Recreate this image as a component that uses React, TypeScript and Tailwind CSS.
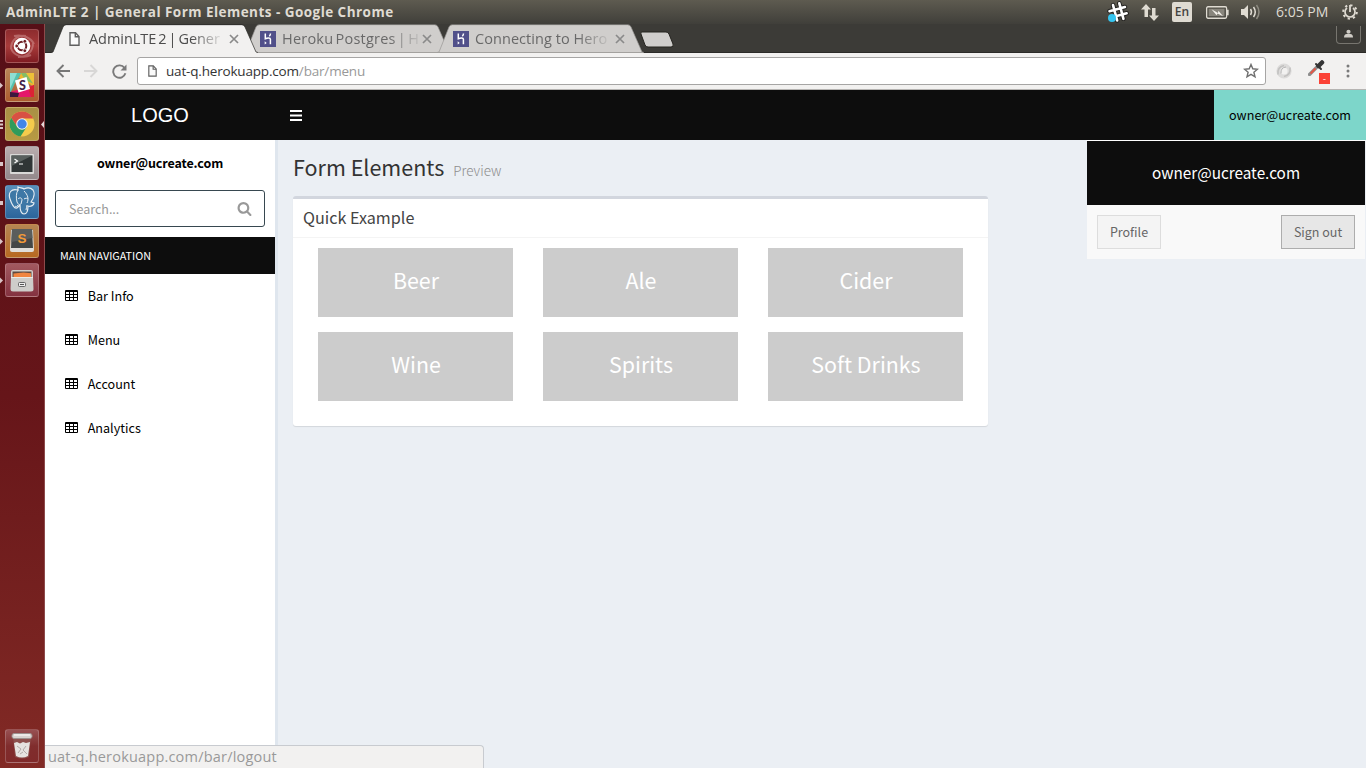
import React from "react";

const UI = "font-['Open_Sans','Noto_Sans',sans-serif]";
const SOURCE = "font-['Noto_Sans_CJK_SC',sans-serif]";

function PageIcon({ className }: { className: string }) {
  return (
    <svg className={className} viewBox="0 0 11 14" fill="none" stroke="#5f5f5f" strokeWidth="1.4">
      <path d="M1 .8h5.5L10 4.5v8.7H1z" fill="#fafafa" />
      <path d="M6.3 1v3.8H10" />
    </svg>
  );
}

function HerokuIcon() {
  return (
    <svg className="h-4 w-4 shrink-0" viewBox="0 0 16 16">
      <rect width="16" height="16" fill="#51508a" />
      <path d="M5.3 2.5v5.2c2-.9 5.1-1.2 5.1.6v5M10.500 2.500c0 1.100-.4 2-1.200 2.700" fill="none" stroke="#fff" strokeWidth="1.5" />
      <path d="M4.700 10.300l2 1.600-2 1.700z" fill="#fff" />
    </svg>
  );
}

function Tab({ title, active, spacing }: { title: string; active?: boolean; spacing: string }) {
  const fill = active ? "#f2f1f0" : "#d0cecc";
  return (
    <div className={"relative h-[29px] w-[207px] shrink-0 -mr-[14px] " + (active ? "z-10" : "")}>
      <svg className="absolute inset-0 h-[29px] w-[207px]" viewBox="0 0 207 29">
        <path d="M0 29L2 28L12 3Q13 1 15 1H191Q193 1 194 3L205 28L207 29Z" fill={fill} />
        <path d="M0 28.500L2 28L12 3Q13 .7 15 .7H191Q193 .7 194 3L205 28L207 28.500" fill="none" stroke={active ? "#2a2926" : "#9a9895"} strokeWidth=".7" />
        {!active && <path d="M1 28.500H206" stroke="#a3a19e" />}
      </svg>
      <div className="relative flex h-[29px] items-center pl-4">
        {active ? <PageIcon className="ml-[2px] mr-[9px] h-[14px] w-[11px] shrink-0" /> : <span className="mr-[6px] flex shrink-0"><HerokuIcon /></span>}
        <span className={"whitespace-nowrap text-[14.5px] leading-5 [mask-image:linear-gradient(to_right,#000_78%,rgba(0,0,0,0.15)_100%)] " + spacing + (active ? " text-[#4c4c4c]" : " text-[#696969]")}>
          {title}
        </span>
        <svg className="absolute left-[178px] top-[10px] h-[10px] w-[10px]" viewBox="0 0 10 10">
          <path d="M1 1l8 8M9 1L1 9" stroke="#8a8a8a" strokeWidth="1.7" />
        </svg>
      </div>
    </div>
  );
}

function Tile({ tone, mark, children }: { tone: string; mark?: string; children: React.ReactNode }) {
  return (
    <div className="flex h-[34px] w-full shrink-0 items-center">
      <svg className="h-[9px] w-[5px] shrink-0" viewBox="0 0 5 9" fill="#d9c5c7">
        {mark === "one" && <path d="M0 1.500L3 4.500L0 7.500z" />}
        {mark === "two" && <path d="M0 3h3v4H0z" />}
        {mark === "many" && <path d="M0 0h3v2H0zM0 3.500h3v2H0zM0 7h3v2H0z" />}
      </svg>
      <div className={"h-[34px] w-[34px] rounded-[3px] border border-white/20 bg-gradient-to-b " + tone}>
        <svg className="h-8 w-8" viewBox="0 0 32 32">
          {children}
        </svg>
      </div>
    </div>
  );
}

function Launcher() {
  return (
    <nav className="relative flex w-[45px] shrink-0 flex-col gap-[5px] border-r border-[#8d4a4b] bg-gradient-to-b from-[#560f17] via-[#661519] to-[#822a25] pt-[5px] pb-[5px]">
      <Tile tone="from-[#8d2c2e] via-[#a83b3b] to-[#801c22]">
        <path d="M5 19C5 10 11 5 20 6M27 13c0 9-6 14-15 14M8 6c9-2 17 2 20 8M25 25C16 29 7 25 5 18" stroke="#d69a97" strokeWidth="2" fill="none" opacity=".5" />
        <circle cx="16" cy="16" r="8.300" fill="#fff" />
        <circle cx="16" cy="16" r="4.300" fill="none" stroke="#6d1d22" strokeWidth="2" />
        <g fill="#6d1d22" stroke="#fff" strokeWidth=".9">
          <circle cx="10.700" cy="16" r="1.900" /><circle cx="18.800" cy="11.300" r="1.900" /><circle cx="18.800" cy="20.700" r="1.900" />
        </g>
      </Tile>
      <Tile mark="one" tone="from-[#b98658] to-[#ad5d2f]">
        <path d="M4 4h12L9 14 4 25z" fill="#57c2ae" />
        <path d="M4 4h7L4 20z" fill="#8edfd3" />
        <path d="M15 4h13v14l-6-4-9-5z" fill="#eeb62f" />
        <path d="M15 4h8l5 11-9-4z" fill="#85bd66" />
        <path d="M20 4h8v12z" fill="#eec038" />
        <path d="M28 16v12H4v-5l18-5z" fill="#e5176a" />
        <path d="M4 23l9 1-1 4H4z" fill="#3c183e" />
        <path d="M22 19l6-3v12h-3z" fill="#db2334" />
        <path d="M9 11.500l11.500-3.500 3.500 12-11.500 3.500z" fill="#fff" />
        <text x="16.500" y="20.500" textAnchor="middle" className="font-['Lato',sans-serif]" fontSize="12.500" fontWeight="900" fill="#43204a">S</text>
      </Tile>
      <Tile mark="many" tone="from-[#a99045] to-[#b79a42]">
        <circle cx="16" cy="16" r="12.500" fill="#f4cc4c" />
        <path d="M5.200 9.700A12.500 12.500 0 0 1 27.200 10.500H16l-5 8z" fill="#d85043" />
        <path d="M5.200 9.700A12.500 12.500 0 0 0 14.500 28.400L20.800 18.800 11.200 18.800z" fill="#2f9b5b" />
        <circle cx="16" cy="16" r="5.800" fill="#f3f1e8" />
        <circle cx="16" cy="16" r="4.700" fill="#4285e8" />
      </Tile>
      <Tile mark="two" tone="from-[#b9adae] to-[#93898b]">
        <rect x="4" y="7" width="24" height="20" rx="1" fill="#d9d9d7" />
        <rect x="5.500" y="8.500" width="21" height="16.500" fill="#303636" />
        <path d="M5.500 8.500h21L5.500 19z" fill="#59605e" />
        <path d="M8.500 12l3 2-3 2M13 17h4" fill="none" stroke="#fff" strokeWidth="1.200" />
      </Tile>
      <Tile mark="two" tone="from-[#588fbb] to-[#2b659b]">
        <path d="M12 4C5 2 2 7 4 13s4 10 7 9l3-3c0 5 1 9 4 9s4-3 4-8c3 1 6-1 6-3l-3-1c3-4 4-9 2-12-3-3-7-2-9-1-1-1-4-1-6-2z" fill="#3e78a6" stroke="#e7edf2" strokeWidth="1.200" />
        <path d="M12 4c-2 3-2 8-1 12 1 2 2 3 3 3M12 13c2-2 4-1 4 1l-1 4M18 5c4 4 5 8 3 12M18 13c1-1 4-1 4 0M9 20c1 1 2 1 3-1M21 19c0 2-1 3-1 5" fill="none" stroke="#e7edf2" strokeWidth="1" />
      </Tile>
      <Tile mark="one" tone="from-[#b58552] to-[#b76920]">
        <path d="M5 5h22l1 20q0 2-2 2H6q-2 0-2-2z" fill="#e0ded9" />
        <path d="M6 4h20l1 19H5z" fill="#444746" />
        <path d="M6 4h20l.5 9L5.500 17z" fill="#5a5d5c" />
        <text x="16" y="17.500" textAnchor="middle" className="font-['Liberation_Sans',sans-serif]" fontSize="13.500" fontWeight="700" fill="#f29b38">S</text>
      </Tile>
      <Tile mark="one" tone="from-[#a25960] to-[#843240]">
        <path d="M5 8q0-2 2-2h18q2 0 2 2v8H5z" fill="#d2d0cd" />
        <path d="M6.500 7.500h19V15h-19z" fill="#5f4a40" />
        <path d="M7.500 9.500l10-1 7.500.8V14H7.500z" fill="#f18540" />
        <path d="M5 13h22l.500 12q0 2.500-2.500 2.500H7q-2.500 0-2.500-2.500z" fill="#cecdca" />
        <path d="M5 13.500h22" stroke="#eceae7" />
        <rect x="12.500" y="18.500" width="7" height="4" rx="1" fill="#eee" stroke="#666" />
        <path d="M14 20.500h4" stroke="#555" />
      </Tile>
      <div className="mt-auto">
        <Tile tone="from-[#975052] via-[#802d2d] to-[#802a2a]">
          <path d="M7 6h18l-2 21q-7 3-14 0z" fill="#8f5653" opacity=".8" />
          <path d="M8 13l3-1 3 1.500 3-1.500 3 1 4-1-2 14q-6 3-12 0z" fill="#e6e3e0" />
          <path d="M11 16l4 3-3 4M20 16l-3 4 4 4M14 24l3-2" stroke="#b2aaa7" fill="none" />
          <rect x="6" y="3.500" width="20" height="5" rx="2" fill="#d8d3d0" stroke="#9d908e" />
          <path d="M8 5h16" stroke="#fff" />
        </Tile>
      </div>
      <svg className="absolute right-0 top-[97px] h-[7px] w-[3px]" viewBox="0 0 3 7"><path d="M3 0v7L0 3.500z" fill="#e5d8d8" /></svg>
    </nav>
  );
}

function SystemBar() {
  return (
    <header className="flex h-6 items-center bg-gradient-to-b from-[#5e5b50] to-[#403f3a] pl-[6px] pr-[8px] text-[#dfdbd2]">
      <h1 className="whitespace-nowrap text-[13.500px] font-bold leading-6 tracking-[0.46px]">AdminLTE 2 | General Form Elements - Google Chrome</h1>
      <div className="ml-auto flex items-center">
        <svg className="mr-[12px] h-[22px] w-[22px]" viewBox="0 0 22 22">
          <g transform="rotate(-15 11 11)" strokeLinecap="round">
            <path d="M8 3v16M14.500 3v16M3 8h16M3 14.500h16" stroke="#22211f" strokeWidth="4.500" />
            <path d="M8 3v16M14.500 3v16M3 8h16M3 14.500h16" stroke="#fff" strokeWidth="2.600" />
          </g>
          <circle cx="5" cy="17" r="4" fill="#35c5f0" />
        </svg>
        <svg className="mr-[13px] h-[17px] w-[18px]" viewBox="0 0 18 17" fill="#dfdbd2">
          <path d="M5 0l5 5.500H7V13H3.500V5.500H0zM13 17l-5-5.500h3V4h3.500v7.500H18z" />
        </svg>
        <span className="mr-[13px] flex h-5 w-5 items-center justify-center rounded-[2px] bg-[#dfdbd2] text-[12px] font-semibold leading-5 text-[#45433f]">En</span>
        <svg className="mr-[11px] h-[13px] w-[25px]" viewBox="0 0 25 14">
          <rect x=".8" y=".8" width="21.500" height="12.400" rx="1.500" fill="none" stroke="#dfdbd2" strokeWidth="1.400" />
          <path d="M23.500 4v6" stroke="#dfdbd2" strokeWidth="2" />
          <rect x="3" y="3" width="17" height="8" fill="#88857c" />
          <path d="M6 3.500l7 4 .5-2.500 5 6-6-3-1 2z" fill="#f4f1eb" />
        </svg>
        <svg className="mr-[15px] h-[18px] w-[20px]" viewBox="0 0 20 18">
          <path d="M0 6h3l4-4v14l-4-4H0z" fill="#dfdbd2" />
          <path d="M9.500 6q2 3 0 6M12.500 4q3.500 5 0 10" fill="none" stroke="#dfdbd2" strokeWidth="1.500" />
          <path d="M15.500 2q5 7 0 14" fill="none" stroke="#8d8a80" strokeWidth="1.500" />
        </svg>
        <span className="w-[66px] whitespace-nowrap text-[14px] leading-6">6:05 PM</span>
        <svg className="h-4 w-4" viewBox="0 0 16 16" fill="none" stroke="#dfdbd2">
          <circle cx="8" cy="8" r="6.800" strokeWidth="2" strokeDasharray="2.300 3.040" />
          <path d="M5 4A5 5 0 1 0 11 4" strokeWidth="1.700" />
          <path d="M8 1v7" strokeWidth="1.800" />
        </svg>
      </div>
    </header>
  );
}

function TabStrip() {
  return (
    <div className="flex h-[29px] bg-[#3c3b37] pl-[6px] shadow-[inset_0_-1px_#2c2b28]">
      <Tab active title="AdminLTE 2 | Gener" spacing="tracking-[-0.05px] [word-spacing:-1.7px]" />
      <Tab title="Heroku Postgres | H" spacing="tracking-[0.22px] [word-spacing:-1.8px]" />
      <Tab title="Connecting to Hero" spacing="tracking-[0.06px]" />
      <svg className="ml-[9px] mt-[7px] h-[17px] w-[35px]" viewBox="0 0 35 17">
        <path d="M3 1h24q2 0 3 2l4 10q1 3-2 3H9q-2 0-3-2L2 3Q1 1 3 1z" fill="#d0cecc" stroke="#25241f" />
      </svg>
      <div className="ml-auto mr-[5px] mt-[2px] flex h-[18px] w-[25px] items-center justify-center rounded-b-[4px] border border-t-0 border-[#77756f]">
        <svg className="mb-[2px] h-[9px] w-[9px]" viewBox="0 0 10 9" fill="#cfccc6"><circle cx="5" cy="2.500" r="2.300" /><path d="M0 9q0-4 3-4h4q3 0 3 4z" /></svg>
      </div>
    </div>
  );
}

function Toolbar() {
  return (
    <div className="flex h-[37px] items-center border-b border-[#b6b4b2] bg-[#f2f1f0] pl-[11px] pr-[10px]">
      <svg className="h-[14px] w-[14px]" viewBox="0 0 14 14" fill="none" stroke="#777" strokeWidth="1.900"><path d="M14 7H1.500M7.500 1L1.500 7l6 6" /></svg>
      <svg className="ml-[14px] h-[14px] w-[14px]" viewBox="0 0 14 14" fill="none" stroke="#d8d7d6" strokeWidth="1.900"><path d="M0 7h12.500M6.500 1l6 6-6 6" /></svg>
      <svg className="ml-[14px] h-[15px] w-[15px]" viewBox="0 0 15 15" fill="none" stroke="#7a7a7a" strokeWidth="1.900"><path d="M12.500 4A6.200 6.200 0 1 0 13.400 9.300" /><path d="M14.500 .5v6H8.500z" fill="#7a7a7a" stroke="none" /></svg>
      <div className="ml-[10px] flex h-7 w-[1129px] items-center rounded-[3px] border border-[#a6a5a4] bg-white pl-[10px] pr-[6px]">
        <PageIcon className="mr-[9px] h-[12px] w-[9px]" />
        <span className="whitespace-nowrap text-[13.500px] leading-6 tracking-[-0.18px] text-[#333]">uat-q.herokuapp.com<span className="text-[#999]">/bar/menu</span></span>
        <svg className="ml-auto h-4 w-4" viewBox="0 0 16 16" fill="none" stroke="#707070" strokeWidth="1.400"><path d="M8 1.500l1.800 4.300 4.700.4-3.600 3 1.100 4.600L8 11.400l-4 2.400 1.100-4.600-3.600-3 4.700-.4z" /></svg>
      </div>
      <svg className="ml-[10px] h-4 w-4" viewBox="0 0 16 16" fill="none"><circle cx="8" cy="8" r="5.600" stroke="#dcdbda" strokeWidth="4" /><path d="M14 4.500Q15 12 8 13.500M2 11.500Q1 4 8 2.500" stroke="#c2c1c0" strokeWidth="1.500" /><path d="M10 4Q4.500 4.500 5 10.500" stroke="#b5b5b5" /></svg>
      <div className="relative ml-4 h-[22px] w-[22px]">
        <svg className="h-[16px] w-[17px]" viewBox="0 0 17 16"><path d="M1.500 14.500L9.500 6.500" stroke="#8d8d8d" strokeWidth="3.200" strokeLinecap="round" /><path d="M2.500 13.500L7.500 8.500" stroke="#e45546" strokeWidth="1.800" /><path d="M8 4l5 5" stroke="#353535" strokeWidth="2" strokeLinecap="round" /><path d="M10.500 6L14 2.500" stroke="#353535" strokeWidth="4.500" strokeLinecap="round" /></svg>
        <span className="absolute -bottom-[2px] right-0 flex h-[11px] w-[11px] items-center justify-center bg-[#fb4236] text-[9px] leading-[8px] text-white">-</span>
      </div>
      <svg className="ml-[16px] h-[14px] w-[4px]" viewBox="0 0 4 14" fill="#7a7a7a"><circle cx="2" cy="2" r="1.500" /><circle cx="2" cy="7" r="1.500" /><circle cx="2" cy="12" r="1.500" /></svg>
    </div>
  );
}

function TableIcon() {
  return (
    <svg className="h-3 w-[13px]" viewBox="0 0 13 12">
      <path fillRule="evenodd" d="M1 0h11q1 0 1 1v9q0 1-1 1H1q-1 0-1-1V1q0-1 1-1zM1 2v2h3V2zm4 0v2h3V2zm4 0v2h3V2zM1 5v2h3V5zm4 0v2h3V5zm4 0v2h3V5zM1 8v2h3V8zm4 0v2h3V8zm4 0v2h3V8z" fill="#000" />
    </svg>
  );
}

function Sidebar() {
  return (
    <aside className="flex w-[230px] shrink-0 flex-col bg-white text-black">
      <p className="h-[50px] text-center text-[12.500px] font-bold leading-[46px] tracking-[-0.12px]">owner@ucreate.com</p>
      <div className="mx-[10px] flex h-[37px] items-center rounded-[3px] border border-[#374850] pl-[13px] pr-3 text-[#999]">
        <span className="text-[12.500px] leading-5">Search...</span>
        <svg className="ml-auto h-[15px] w-[15px]" viewBox="0 0 1792 1792" fill="#999"><path d="M1216 832q0-185-131.500-316.500t-316.500-131.500-316.500 131.500-131.500 316.500 131.500 316.500 316.500 131.500 316.500-131.500 131.500-316.500zm512 832q0 52-38 90t-90 38q-54 0-90-38l-343-342q-179 124-399 124-143 0-273.500-55.500t-225-150-150-225-55.500-273.500 55.500-273.500 150-225 225-150 273.500-55.500 273.500 55.500 225 150 150 225 55.500 273.500q0 220-124 399l343 343q37 37 37 90z" /></svg>
      </div>
      <h2 className="mt-[10px] h-[37px] bg-[#0d0d0d] pl-[15px] text-[10.800px] leading-[37px] text-white">MAIN NAVIGATION</h2>
      <ul>
        {["Bar Info", "Menu", "Account", "Analytics"].map((label) => (
          <li key={label} className="flex h-11 items-center gap-[9.700px] pl-5 text-[12.600px] leading-5"><TableIcon />{label}</li>
        ))}
      </ul>
    </aside>
  );
}

function Content() {
  return (
    <main className="relative flex-1 border-l-[3px] border-[#dfe6ee] bg-[#ebeff4] px-[15px] text-[#333]">
      <div className="flex h-[56px] items-baseline pt-[9px] leading-9">
        <h2 className="text-[21.500px]">Form Elements</h2>
        <small className="ml-[9px] text-[13.500px] font-light text-[#8d8d8d]">Preview</small>
      </div>
      <section className="h-[230px] w-[695px] rounded-[3px] border-t-[3px] border-[#d2d6de] bg-white shadow-[0_1px_1px_rgba(0,0,0,0.1)]">
        <h3 className="h-[39px] border-b border-[#f4f4f4] pl-[10px] text-[16.150px] leading-[36px] text-[#444]">Quick Example</h3>
        <div className="grid grid-cols-3 gap-x-[30px] gap-y-[15px] px-[25px] pt-[10px]">
          {["Beer", "Ale", "Cider", "Wine", "Spirits", "Soft Drinks"].map((label) => (
            <div key={label} className="flex h-[69px] items-center justify-center bg-[#ccc] pb-[5px] pl-px text-[21.400px] leading-[30px] text-white">{label}</div>
          ))}
        </div>
      </section>
      <div className="absolute right-0 top-0 w-[280px] border border-b-0 border-transparent border-t-white">
        <p className="h-[64px] bg-[#0d0d0d] text-center text-[15.300px] leading-[62px] text-white">owner@ucreate.com</p>
        <div className="flex h-[54px] justify-between bg-[#f9f9f9] p-[10px] text-[12.500px] leading-8 text-[#666]">
          <button className="w-16 border border-[#ddd] bg-[#f4f4f4]">Profile</button>
          <button className="w-[74px] border border-[#adadad] bg-[#e7e7e7]">Sign out</button>
        </div>
      </div>
    </main>
  );
}

export default function App() {
  return (
    <div className={"flex h-[768px] w-[1366px] flex-col overflow-hidden " + UI}>
      <SystemBar />
      <div className="flex min-h-0 flex-1">
        <Launcher />
        <div className="relative flex min-w-0 flex-1 flex-col">
          <TabStrip />
          <Toolbar />
          <div className={"flex min-h-0 flex-1 flex-col " + SOURCE}>
            <header className="flex h-[50px] shrink-0 bg-[#0d0d0d] text-white">
              <span className="w-[230px] text-center font-['Liberation_Sans',sans-serif] text-[20px] leading-[50px]">LOGO</span>
              <svg className="ml-[15px] mt-5 h-[11px] w-3" viewBox="0 0 12 11" fill="#fff"><path d="M0 0h12v2H0zM0 4.500h12v2H0zM0 9h12v2H0z" /></svg>
              <span className="ml-auto w-[152px] bg-[#7dd6ca] text-center text-[12.600px] leading-[50px] text-black">owner@ucreate.com</span>
            </header>
            <div className="flex min-h-0 flex-1"><Sidebar /><Content /></div>
          </div>
          <div className="absolute bottom-0 left-0 h-[23px] w-[439px] rounded-tr-[4px] border-r border-t border-[#c8cbd0] bg-[#f2f1f0] pl-[3px] text-[14.500px] leading-[22px] tracking-[0.2px] text-[#999]">uat-q.herokuapp.com/bar/logout</div>
        </div>
      </div>
    </div>
  );
}
